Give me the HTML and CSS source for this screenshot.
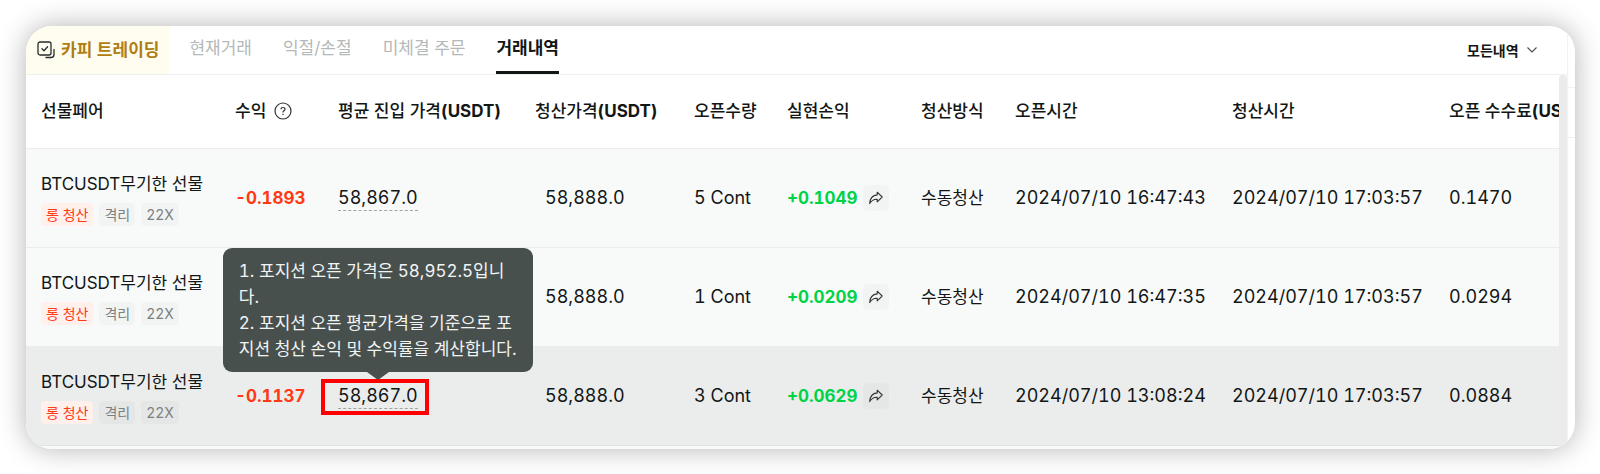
FILE: index.html
```html
<!DOCTYPE html>
<html lang="ko">
<head>
<meta charset="utf-8">
<title>거래내역</title>
<link rel="stylesheet" href="styles.css">
</head>
<body>
<svg class="defs" aria-hidden="true">
  <symbol id="share" viewBox="0 0 16 16">
    <path d="M9.200 2.200 14.200 7 9.200 11.800V9.200C5.600 9 3.400 10.600 1.700 13.600 1.900 9 4.400 5.400 9.200 4.900Z" fill="none" stroke="currentColor" stroke-width="1.100" stroke-linejoin="round"/>
  </symbol>
</svg>
<main class="card">
  <section class="panel">
    <nav class="tabs">
      <a class="copy-tab" href="#copy">
        <svg class="copy-icon" viewBox="0 0 18 18" fill="none" stroke="#262b2a" stroke-width="1.300" stroke-linecap="round" stroke-linejoin="round">
          <rect x="1" y="1" width="13" height="13" rx="2"/>
          <path d="M5 7.700 7 9.700 10.600 5.800M17 8.500V13.500Q17 16.500 14 16.500H9"/>
        </svg>
        카피 트레이딩
      </a>
      <a class="tab" href="#positions">현재거래</a>
      <a class="tab" href="#tpsl">익절/손절</a>
      <a class="tab" href="#open">미체결 주문</a>
      <a class="tab tab-active" href="#history">거래내역</a>
      <label class="filter">
        <select class="filter-select" aria-label="내역 필터"><option>모든내역</option></select>
        <svg class="chevron" viewBox="0 0 10 10" fill="none" stroke="#4a4f4e" stroke-width="1.100"><path d="M.5 2.500 5 7 9.500 2.500"/></svg>
      </label>
    </nav>
    <div class="scroller">
      <div class="viewport">
        <table class="history">
          <colgroup>
            <col class="c-pair"><col class="c-roi"><col class="c-entry"><col class="c-close"><col class="c-qty"><col class="c-pnl"><col class="c-method"><col class="c-time"><col class="c-time"><col>
          </colgroup>
          <thead>
            <tr>
              <th>선물페어</th>
              <th><span class="with-icon">수익
                <svg class="help" viewBox="0 0 18 18" fill="none" stroke="#303534" stroke-width="1.200"><circle cx="9" cy="9" r="8"/><path d="M7 7.300Q7 5.500 9 5.500 11 5.500 11 7.200 11 8.200 9.900 8.800 9 9.300 9 10.400M9 11.700V13"/></svg></span></th>
              <th>평균 진입 가격<b>(USDT)</b></th>
              <th>청산가격<b>(USDT)</b></th>
              <th>오픈수량</th>
              <th>실현손익</th>
              <th>청산방식</th>
              <th>오픈시간</th>
              <th>청산시간</th>
              <th>오픈 수수료<b>(USDT)</b></th>
            </tr>
          </thead>
          <tbody>
            <tr>
              <td><div class="pair">BTCUSDT무기한 선물</div><div class="badges"><span class="badge badge-long">롱 청산</span><span class="badge">격리</span><span class="badge">22X</span></div></td>
              <td class="loss">-0.1893</td>
              <td class="num"><span class="entry">58,867.0</span></td>
              <td class="num close-price">58,888.0</td>
              <td class="num">5 Cont</td>
              <td><span class="pnl">+0.1049<button class="share" type="button" aria-label="공유"><svg class="share-icon"><use href="#share"/></svg></button></span></td>
              <td>수동청산</td>
              <td class="num">2024/07/10 16:47:43</td>
              <td class="num">2024/07/10 17:03:57</td>
              <td class="num">0.1470</td>
            </tr>
            <tr>
              <td><div class="pair">BTCUSDT무기한 선물</div><div class="badges"><span class="badge badge-long">롱 청산</span><span class="badge">격리</span><span class="badge">22X</span></div></td>
              <td></td>
              <td></td>
              <td class="num close-price">58,888.0</td>
              <td class="num">1 Cont</td>
              <td><span class="pnl">+0.0209<button class="share" type="button" aria-label="공유"><svg class="share-icon"><use href="#share"/></svg></button></span></td>
              <td>수동청산</td>
              <td class="num">2024/07/10 16:47:35</td>
              <td class="num">2024/07/10 17:03:57</td>
              <td class="num">0.0294</td>
            </tr>
            <tr class="hovered">
              <td><div class="pair">BTCUSDT무기한 선물</div><div class="badges"><span class="badge badge-long">롱 청산</span><span class="badge">격리</span><span class="badge">22X</span></div></td>
              <td class="loss">-0.1137</td>
              <td class="num"><span class="entry entry-marked">58,867.0<span class="tooltip" role="tooltip">1. 포지션 오픈 가격은 58,952.5입니다.<br>2. 포지션 오픈 평균가격을 기준으로 포지션 청산 손익 및 수익률을 계산합니다.</span></span></td>
              <td class="num close-price">58,888.0</td>
              <td class="num">3 Cont</td>
              <td><span class="pnl">+0.0629<button class="share" type="button" aria-label="공유"><svg class="share-icon"><use href="#share"/></svg></button></span></td>
              <td>수동청산</td>
              <td class="num">2024/07/10 13:08:24</td>
              <td class="num">2024/07/10 17:03:57</td>
              <td class="num">0.0884</td>
            </tr>
          </tbody>
        </table>
      </div>
      <div class="scrollbar"></div>
    </div>
  </section>
  <div class="side"><div class="side-box"></div></div>
</main>
</body>
</html>
```

FILE: styles.css
```css
* { box-sizing: border-box; }

body {
  margin: 0;
  padding: 26px 25px 26px 26px;
  background: #fff;
  color: #121615;
  font-family: Inter, "Noto Sans CJK KR", sans-serif;
  font-size: 17px;
  font-variant-numeric: tabular-nums;
  line-height: 26px;
}

.defs { position: absolute; width: 0; height: 0; }

.card {
  display: grid;
  grid-template-columns: 1fr 8px;
  overflow: hidden;
  border-radius: 26px;
  background: #fff;
  box-shadow: 0 0 28px rgba(0, 0, 0, 0.3);
}

.panel { min-width: 0; }

.tabs {
  display: flex;
  gap: 31px;
  height: 49px;
  border-bottom: 1px solid #eff0f0;
  white-space: nowrap;
}

.copy-tab {
  display: flex;
  align-items: center;
  gap: 6px;
  margin-right: -11px;
  padding: 0 10px 0 11px;
  background: #fffdf0;
  color: #b07d12;
  font-weight: 700;
  text-decoration: none;
}

.copy-icon { width: 18px; height: 18px; }

.tab {
  padding-top: 9px;
  color: #b5b8b8;
  text-decoration: none;
}

.tab-active {
  border-bottom: 3px solid #121615;
  color: #121615;
  font-weight: 700;
}

.filter {
  display: flex;
  align-items: center;
  gap: 8px;
  margin-left: auto;
  padding-right: 30px;
}

.filter-select {
  appearance: none;
  padding: 0;
  border: 0;
  background: none;
  color: #121615;
  font-family: inherit;
  font-size: 14px;
  font-weight: 700;
}

.chevron { width: 10px; height: 10px; }

.scroller {
  display: grid;
  grid-template-columns: 1fr 8px;
  min-width: 0;
}

.viewport {
  overflow: hidden;
  min-width: 0;
  padding-bottom: 3px;
  background: #f8f9f9;
}

.scrollbar {
  border-radius: 4px 4px 0 0;
  background: #ebebeb;
}

.history {
  width: 100%;
  table-layout: fixed;
  border-collapse: separate;
  border-spacing: 0;
  white-space: nowrap;
}

.c-pair { width: 194px; }
.c-roi { width: 103px; }
.c-entry { width: 197px; }
.c-close { width: 159px; }
.c-qty { width: 93px; }
.c-pnl { width: 134px; }
.c-method { width: 94px; }
.c-time { width: 217px; }

.history th,
.history td {
  padding: 0 0 0 15px;
  border-bottom: 1px solid #ebeded;
  text-align: left;
  vertical-align: middle;
}

.history th {
  height: 74px;
  padding-bottom: 2px;
  background: #fff;
  font-weight: 500;
}

.history th b { font-weight: 700; }

.history td {
  height: 99px;
  background: #f8faf9;
}

.history .hovered td { background: #ebeded; border-color: #e0e2e2; }

.history .num { font-size: 18px; }

.history .close-price { padding-left: 25px; }

.history .loss { color: #ff3a14; font-weight: 700; }

.with-icon {
  display: flex;
  align-items: center;
  gap: 8px;
}

.help { width: 18px; height: 18px; }

.badges {
  display: flex;
  gap: 6px;
  margin-top: 6px;
}

.badge {
  padding: 0 5px;
  border-radius: 4px;
  background: rgba(0, 0, 0, 0.024);
  color: #7c8080;
  font-size: 14px;
  line-height: 23px;
}

.badge-long { background: #fff0ec; color: #ff3a14; }

.entry {
  position: relative;
  display: inline-block;
  border-bottom: 1px dashed #a0a4a4;
  line-height: 24px;
}

.entry-marked::before {
  content: "";
  position: absolute;
  inset: -5px -11px -7px -17px;
  border: 4px solid #f00;
}

.tooltip {
  position: absolute;
  bottom: 36px;
  left: 50%;
  width: 310px;
  margin-left: -155px;
  padding: 10px 16px;
  border-radius: 9px;
  background: #48504e;
  color: #f2f4f4;
  font-size: 17px;
  line-height: 26px;
  white-space: normal;
}

.tooltip::after {
  content: "";
  position: absolute;
  top: 100%;
  left: 50%;
  margin-left: -11px;
  border: 11px solid transparent;
  border-top: 8px solid #48504e;
  border-bottom: 0;
}

.pnl {
  display: flex;
  align-items: center;
  gap: 5px;
  color: #00d346;
  font-weight: 700;
}

.share {
  display: grid;
  place-items: center;
  width: 26px;
  height: 26px;
  padding: 0;
  border: 0;
  border-radius: 5px;
  background: rgba(0, 0, 0, 0.024);
  color: #303534;
}

.share-icon { width: 16px; height: 16px; }

.side {
  padding-top: 61px;
  border-left: 1px solid #f2f2f2;
}

.side-box {
  height: 51px;
  border: solid #f0f0f0;
  border-width: 1px 0;
}
```
